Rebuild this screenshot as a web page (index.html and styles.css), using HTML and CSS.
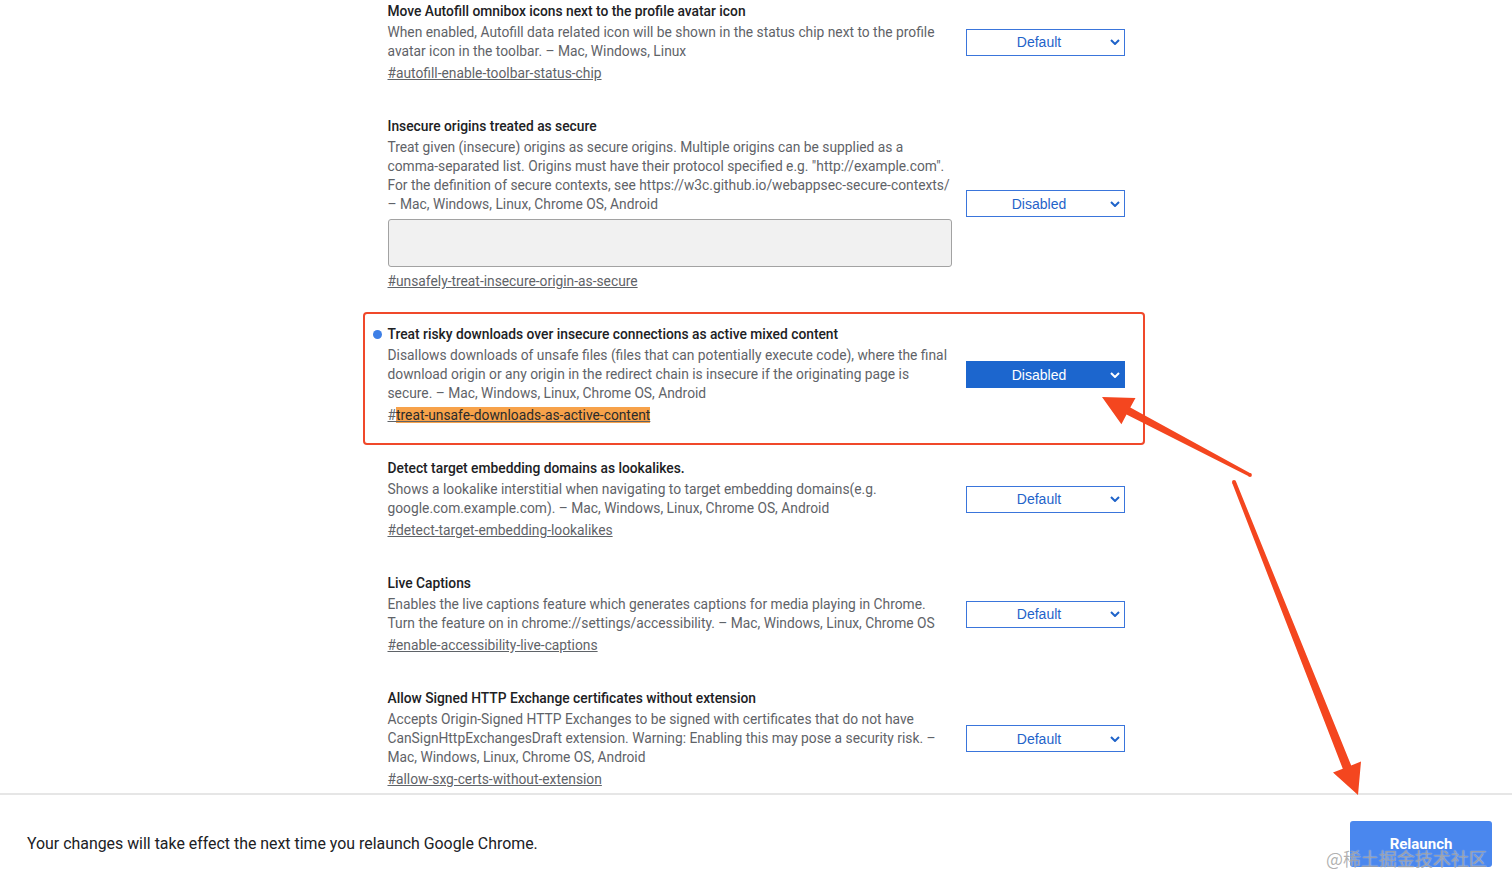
FILE: index.html
```html
<!DOCTYPE html>
<html lang="en">
<head>
<meta charset="utf-8">
<title>Experiments</title>
<link rel="stylesheet" href="styles.css">
</head>
<body>
<div class="page">
  <main class="flags">
    <div class="list">
      <div class="exp">
        <div class="exp-text">
          <div class="exp-title">Move Autofill omnibox icons next to the profile avatar icon</div>
          <p class="exp-desc">When enabled, Autofill data related icon will be shown in the status chip next to the profile avatar icon in the toolbar. – Mac, Windows, Linux</p>
          <a class="exp-link" href="#autofill-enable-toolbar-status-chip">#autofill-enable-toolbar-status-chip</a>
        </div>
        <div class="select"><span class="select-label">Default</span><svg class="chev" viewBox="0 0 10 6"><polyline points="1,1 5,5 9,1"/></svg></div>
      </div>

      <div class="exp">
        <div class="exp-text">
          <div class="exp-title">Insecure origins treated as secure</div>
          <p class="exp-desc">Treat given (insecure) origins as secure origins. Multiple origins can be supplied as a comma-separated list. Origins must have their protocol specified e.g. "http://example.com". For the definition of secure contexts, see https://w3c.github.io/webappsec-secure-contexts/ – Mac, Windows, Linux, Chrome OS, Android</p>
          <div class="textarea"></div>
          <a class="exp-link" href="#unsafely-treat-insecure-origin-as-secure">#unsafely-treat-insecure-origin-as-secure</a>
        </div>
        <div class="select"><span class="select-label">Disabled</span><svg class="chev" viewBox="0 0 10 6"><polyline points="1,1 5,5 9,1"/></svg></div>
      </div>

      <div class="exp exp-marked">
        <div class="mark-box"></div>
        <div class="exp-text">
          <div class="exp-title"><span class="dot"></span>Treat risky downloads over insecure connections as active mixed content</div>
          <p class="exp-desc">Disallows downloads of unsafe files (files that can potentially execute code), where the final download origin or any origin in the redirect chain is insecure if the originating page is secure. – Mac, Windows, Linux, Chrome OS, Android</p>
          <a class="exp-link" href="#treat-unsafe-downloads-as-active-content">#<span class="hl">treat-unsafe-downloads-as-active-content</span></a>
        </div>
        <div class="select select-on"><span class="select-label">Disabled</span><svg class="chev" viewBox="0 0 10 6"><polyline points="1,1 5,5 9,1"/></svg></div>
      </div>

      <div class="exp">
        <div class="exp-text">
          <div class="exp-title">Detect target embedding domains as lookalikes.</div>
          <p class="exp-desc">Shows a lookalike interstitial when navigating to target embedding domains(e.g. google.com.example.com). – Mac, Windows, Linux, Chrome OS, Android</p>
          <a class="exp-link" href="#detect-target-embedding-lookalikes">#detect-target-embedding-lookalikes</a>
        </div>
        <div class="select"><span class="select-label">Default</span><svg class="chev" viewBox="0 0 10 6"><polyline points="1,1 5,5 9,1"/></svg></div>
      </div>

      <div class="exp">
        <div class="exp-text">
          <div class="exp-title">Live Captions</div>
          <p class="exp-desc">Enables the live captions feature which generates captions for media playing in Chrome. Turn the feature on in chrome://settings/accessibility. – Mac, Windows, Linux, Chrome OS</p>
          <a class="exp-link" href="#enable-accessibility-live-captions">#enable-accessibility-live-captions</a>
        </div>
        <div class="select"><span class="select-label">Default</span><svg class="chev" viewBox="0 0 10 6"><polyline points="1,1 5,5 9,1"/></svg></div>
      </div>

      <div class="exp">
        <div class="exp-text">
          <div class="exp-title">Allow Signed HTTP Exchange certificates without extension</div>
          <p class="exp-desc">Accepts Origin-Signed HTTP Exchanges to be signed with certificates that do not have CanSignHttpExchangesDraft extension. Warning: Enabling this may pose a security risk. – Mac, Windows, Linux, Chrome OS, Android</p>
          <a class="exp-link" href="#allow-sxg-certs-without-extension">#allow-sxg-certs-without-extension</a>
        </div>
        <div class="select"><span class="select-label">Default</span><svg class="chev" viewBox="0 0 10 6"><polyline points="1,1 5,5 9,1"/></svg></div>
      </div>
    </div>
  </main>

  <footer class="footer">
    <div class="footer-msg">Your changes will take effect the next time you relaunch Google Chrome.</div>
    <button class="relaunch">Relaunch</button>
    <div class="watermark">@稀土掘金技术社区</div>
  </footer>
</div>

<svg class="annot" viewBox="0 0 1512 892" width="1512" height="892">
  <polygon points="1102,397 1135.5,397.9 1130.3,407.6 1250.8,473.4 1249.2,476.6 1126.5,414.6 1121.4,424.3"/>
  <circle cx="1250" cy="475" r="1.9"/>
  <polygon points="1358,795 1333,772.6 1342.8,768.8 1232.1,482.7 1235.9,481.3 1351.2,765.4 1361,761.6"/>
  <circle cx="1234" cy="482" r="2"/>
</svg>
</body>
</html>
```
FILE: styles.css
```css
* { box-sizing: border-box; }

html, body {
  margin: 0;
  padding: 0;
  background: #fff;
}

body {
  width: 1512px;
  height: 892px;
  overflow: hidden;
  font-family: Roboto, "Liberation Sans", Arial, sans-serif;
  color: #202124;
}

.page {
  display: flex;
  flex-direction: column;
  height: 892px;
}

.flags {
  height: 793px;
  overflow: hidden;
  flex: none;
}

.list {
  width: 737px;
  margin: 0 auto;
  padding-top: 1px;
}

.exp {
  display: flex;
  align-items: center;
  gap: 14px;
  margin-bottom: 33px;
  position: relative;
}

.exp-text {
  width: 564px;
  flex: none;
}

.exp-title {
  font-size: 13.8px;
  font-weight: 500;
  line-height: 20px;
  color: #202124;
  position: relative;
}

.exp-desc {
  margin: 2px 0 0;
  font-size: 13.8px;
  line-height: 19px;
  color: #5f6368;
}

.exp-link {
  display: inline-block;
  margin-top: 3px;
  font-size: 13.8px;
  line-height: 19px;
  color: #5f6368;
  text-decoration: underline;
}

.hl {
  background: #f7a24a;
  color: #2a2a2a;
}

.textarea {
  height: 48px;
  margin: 5px 0 2px;
  background: #f1f1f1;
  border: 1px solid #a2a2a2;
  border-radius: 3px;
}

.select {
  width: 159px;
  height: 27px;
  flex: none;
  display: flex;
  align-items: center;
  border: 1px solid #3a75db;
  background: #fff;
  color: #1f63c9;
  font-family: "Liberation Sans", Arial, sans-serif;
  font-size: 14px;
  position: relative;
}

.select-label {
  flex: 1;
  text-align: center;
  padding-left: 2px;
}

.chev {
  width: 10px;
  height: 6px;
  margin-right: 4px;
  fill: none;
  stroke: #1f63c9;
  stroke-width: 2;
}

.select-on {
  background: #1c66ce;
  border-color: #1c66ce;
  color: #fff;
}

.select-on .chev { stroke: #fff; }

.mark-box {
  position: absolute;
  left: -25px;
  right: -20px;
  top: -12px;
  bottom: -20px;
  border: 2.5px solid #f0482a;
  border-radius: 4px;
  pointer-events: none;
}

.dot {
  position: absolute;
  left: -15px;
  top: 5.5px;
  width: 9px;
  height: 9px;
  border-radius: 50%;
  background: #3d7fe6;
}

.footer {
  flex: 1;
  border-top: 2px solid #e6e6e6;
  display: flex;
  align-items: center;
  justify-content: space-between;
  padding: 0 20px 0 27px;
  position: relative;
}

.footer-msg {
  font-size: 15.9px;
  color: #202124;
}

.relaunch {
  width: 142px;
  height: 46px;
  border: none;
  border-radius: 3px;
  background: #4a87ee;
  color: #fff;
  font-family: Roboto, "Liberation Sans", Arial, sans-serif;
  font-size: 15px;
  font-weight: 700;
  margin-top: 1px;
}

.watermark {
  position: absolute;
  right: 25px;
  top: 50px;
  font-family: "Noto Sans CJK SC", "Liberation Sans", sans-serif;
  font-size: 18px;
  color: rgba(110, 110, 110, 0.55);
  text-shadow: 0 0 1px rgba(255, 255, 255, 0.8);
  pointer-events: none;
}

.annot {
  position: fixed;
  left: 0;
  top: 0;
  pointer-events: none;
  fill: #f4461f;
}
```
